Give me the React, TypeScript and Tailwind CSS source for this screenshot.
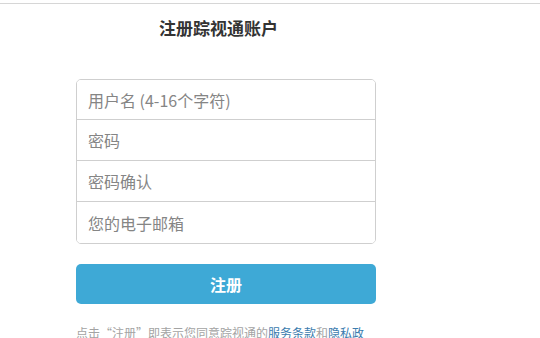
export default function App() {
    const fields = [
        { name: 'username', type: 'text', placeholder: '用户名 (4-16个字符)' },
        { name: 'password', type: 'password', placeholder: '密码' },
        { name: 'confirm', type: 'password', placeholder: '密码确认' },
        { name: 'email', type: 'email', placeholder: '您的电子邮箱' },
    ];

    return (
        <main className="w-[540px] h-[338px] overflow-hidden bg-white font-['Noto_Sans_CJK_SC','Noto_Sans',sans-serif]">
            <div className="mt-[3px] h-px bg-[#d6d6d6]" />
            <h1 className="ml-[159px] mt-[15px] text-[17px] leading-[17px] font-bold text-[#333]">注册踪视通账户</h1>
            <form className="ml-[76px] mt-[43px] w-[300px]" onSubmit={(e) => e.preventDefault()}>
                <div className="flex flex-col border border-[#cfcfcf] rounded-[5px] divide-y divide-[#cfcfcf] overflow-hidden">
                    {fields.map((f) => (
                        <input
                            key={f.name}
                            name={f.name}
                            type={f.type}
                            placeholder={f.placeholder}
                            className="h-[41px] first:h-[40px] px-[11px] text-[16px] text-[#555] placeholder:text-[#858585] outline-none bg-white"
                        />
                    ))}
                </div>
                <button type="submit" className="mt-[20px] w-full h-[40px] rounded-[5px] bg-[#3ea9d6] text-white text-[16px] font-bold">
                    注册
                </button>
                <p className="mt-[21px] w-[292px] text-[12px] leading-[16px] text-[#a3a3a3]">
                    点击“注册”即表示您同意踪视通的<a href="#" className="text-[#3b7cae]">服务条款</a>和<a href="#" className="text-[#3b7cae]">隐私政策</a>
                </p>
            </form>
        </main>
    );
}
